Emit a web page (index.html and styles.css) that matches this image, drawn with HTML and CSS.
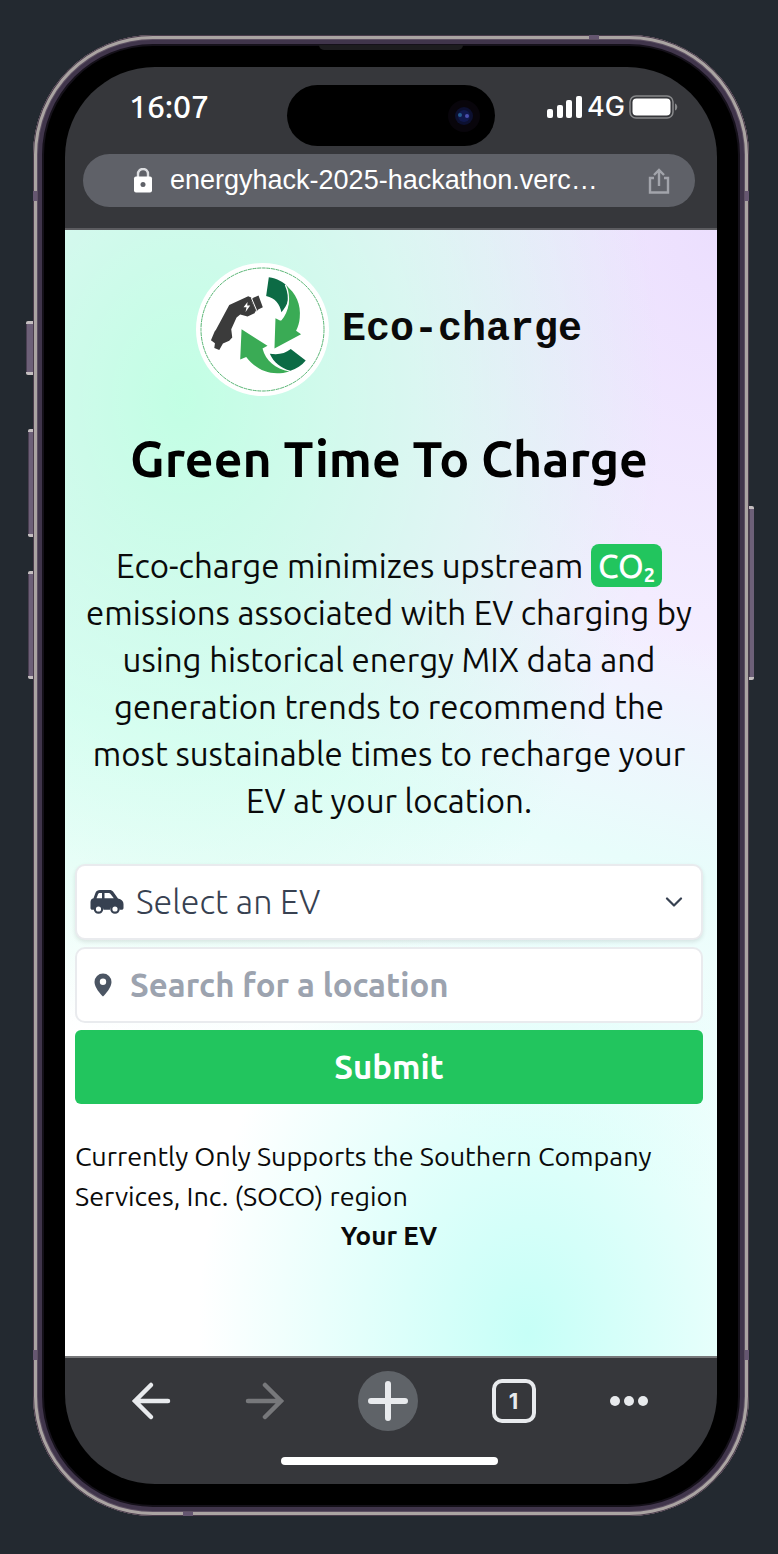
FILE: index.html
```html
<!DOCTYPE html>
<html lang="en">
<head>
<meta charset="utf-8">
<meta name="viewport" content="width=device-width, initial-scale=1">
<title>Eco-charge</title>
<link rel="stylesheet" href="styles.css">
</head>
<body>
<div class="phone">
  <span class="key key-mute"></span>
  <span class="key key-up"></span>
  <span class="key key-down"></span>
  <span class="key key-power"></span>
  <span class="band band-top"></span>
  <span class="band band-bottom"></span>
  <span class="band band-side band-left-high"></span>
  <span class="band band-side band-left-low"></span>
  <span class="band band-side band-right-high"></span>
  <span class="band band-side band-right-low"></span>
  <span class="speaker"></span>
  <div class="screen">
    <header class="browser-top">
      <div class="status">
        <time class="clock">16:07</time>
        <div class="island">
          <svg class="lens" viewBox="0 0 34 34" aria-hidden="true">
            <circle cx="17" cy="17" r="16" fill="#08050b"/>
            <circle cx="17" cy="17" r="9" fill="#0c1030"/>
            <circle cx="17" cy="17" r="6" fill="#10184c"/>
            <circle cx="13" cy="16" r="2" fill="#235a8c"/>
            <circle cx="20" cy="17" r="2" fill="#4a4fae"/>
          </svg>
        </div>
        <div class="signals">
          <svg class="bars" viewBox="0 0 36 22" aria-hidden="true">
            <g fill="#fff"><rect x="0" y="13" width="6" height="9" rx="2"/><rect x="10" y="9" width="6" height="13" rx="2"/><rect x="19" y="4" width="6" height="18" rx="2"/><rect x="29" y="0" width="6" height="22" rx="2"/></g>
          </svg>
          <span class="network">4G</span>
          <svg class="battery" viewBox="0 0 50 24" aria-hidden="true">
            <rect x="1" y="1" width="43" height="22" rx="6" fill="none" stroke="#88898b" stroke-width="1.5"/>
            <rect x="3.5" y="3.5" width="38" height="17" rx="4" fill="#fff"/>
            <path d="M46 8.500c3 1 3 6 0 7z" fill="#88898b"/>
          </svg>
        </div>
      </div>
      <div class="address">
        <svg class="lock" viewBox="0 0 20 26" aria-hidden="true">
          <path d="M5 10V6a5 5 0 0 1 10 0v4" fill="none" stroke="#dcdde0" stroke-width="2.400"/>
          <rect x="1" y="8.500" width="18" height="16" rx="2" fill="#fff"/>
          <circle cx="10" cy="16.500" r="2.500" fill="#5f6168"/>
        </svg>
        <span class="url">energyhack-2025-hackathon.verc…</span>
        <button class="share" type="button" aria-label="Share">
          <svg viewBox="0 0 22 26" fill="none" stroke="#a2a4ab" stroke-width="2.400" aria-hidden="true">
            <path d="M6 10H2v14.500h18V10h-4M11 18V2M6 7l5-5 5 5"/>
          </svg>
        </button>
      </div>
    </header>

    <main class="page">
      <div class="brand">
        <svg class="logo" viewBox="47 40 400 400" aria-hidden="true">
          <circle cx="247" cy="240" r="200" fill="#fff"/>
          <circle cx="247" cy="240" r="185" fill="none" stroke="#58b574" stroke-width="3" stroke-dasharray="12 2"/>
          <path d="M266 83C291 87 310 97 324 113C333 140 322 168 304 188C299 163 285 145 258 139Z" fill="#0c6b45"/>
          <path d="M317 108C348 130 363 166 359 205C358 220 354 232 348 244L363 254L283 297L286 206L301 214C323 187 336 148 317 108Z" fill="#3aab55"/>
          <path d="M316 106C334 145 323 187 302 212" fill="none" stroke="#fff" stroke-width="4"/>
          <path d="M184 239L262 289L247 297C257 334 285 358 328 366C274 382 229 363 198 323L180 330Z" fill="#3aab55"/>
          <path d="M269 313C295 317 314 313 332 299L377 333C365 348 349 358 331 364C303 357 280 339 269 313Z" fill="#0c6b45"/>
          <path d="M147 166L204 140L213 144L215 158L227 183L223 191L202 201L180 195L169 204L153 239L156 264L147 274L128 282L117 302L102 296L104 281L92 272L103 246L107 241Z" fill="#3b3b3b"/>
          <path d="M211 150L218 146L234 181L227 186ZM218 145L235 138L248 173L231 181Z" fill="#3b3b3b"/>
          <path d="M214 146L230 184" stroke="#fff" stroke-width="3"/>
          <path d="M202 157L190 173L199 173L196 187L210 168L201 168Z" fill="#fff"/>
        </svg>
        <span class="brand-name">Eco-charge</span>
      </div>
      <h1 class="title">Green Time To Charge</h1>
      <p class="intro">Eco-charge minimizes upstream <span class="co2">CO<sub>2</sub></span> emissions associated with EV charging by using historical energy MIX data and generation trends to recommend the most sustainable times to recharge your EV at your location.</p>
      <form class="form">
        <label class="field field-select">
          <svg class="car" viewBox="0 0 34 26" aria-hidden="true">
            <path fill="#374151" fill-rule="evenodd" d="M10 1h9.500c1.500 0 2.800.6 3.700 1.800L28 9.500c3.500.5 5.500 2.800 5.500 5.500v4c0 1-.8 1.800-1.800 1.800h-2a5 5 0 0 0-9.800 0h-6.300a5 5 0 0 0-9.800 0H2.500C1.200 20.800.5 20 .5 19v-6c0-2 1-3.300 3-3.800l2-5.500C6.300 2 7.800 1 10 1zm0 3c-1 0-1.600.3-2 1.200L6.500 9.300H12V4zm4.500 0v5.300h9.300l-3.500-4.600c-.4-.5-.8-.7-1.500-.7z"/>
            <circle cx="8.500" cy="20" r="3.700" fill="#fff" stroke="#374151" stroke-width="2.200"/>
            <circle cx="25" cy="20" r="3.700" fill="#fff" stroke="#374151" stroke-width="2.200"/>
          </svg>
          <select class="control" aria-label="Select an EV"><option>Select an EV</option></select>
          <svg class="chevron" viewBox="0 0 18 10" aria-hidden="true"><path d="M2 1.500l7 7 7-7" fill="none" stroke="#374151" stroke-width="2.200" stroke-linecap="round" stroke-linejoin="round"/></svg>
        </label>
        <label class="field field-search">
          <svg class="pin" viewBox="0 0 18 24" aria-hidden="true"><path fill="#4b5563" fill-rule="evenodd" d="M9 .5a8.500 8.500 0 0 1 8.500 8.500c0 5.500-6 12-8.500 14.500C6.500 21 .5 14.500.5 9A8.500 8.500 0 0 1 9 .5zm0 5a3.200 3.200 0 1 0 0 6.400 3.200 3.200 0 0 0 0-6.400z"/></svg>
          <input class="control control-bold" type="text" placeholder="Search for a location" aria-label="Search for a location">
        </label>
        <button class="submit" type="button">Submit</button>
      </form>
      <p class="note">Currently Only Supports the Southern Company Services, Inc. (SOCO) region</p>
      <h2 class="subtitle">Your EV</h2>
    </main>

    <footer class="browser-bottom">
      <nav class="tools">
        <button class="tool" type="button" aria-label="Back"><svg viewBox="0 0 40 40" fill="none" stroke="#e8eaed" stroke-width="4.500" stroke-linecap="round"><path d="M37 20H4M20 4L4 20l16 16"/></svg></button>
        <button class="tool" type="button" aria-label="Forward"><svg viewBox="0 0 40 40" fill="none" stroke="#77787b" stroke-width="4.500" stroke-linecap="round"><path d="M3 20h33M20 4l16 16-16 16"/></svg></button>
        <button class="tool tool-add" type="button" aria-label="New tab"><svg viewBox="0 0 40 40" fill="none" stroke="#e8eaed" stroke-width="6" stroke-linecap="round"><path d="M20 3v34M3 20h34"/></svg></button>
        <button class="tool tool-tabs" type="button" aria-label="Tabs">1</button>
        <button class="tool" type="button" aria-label="More"><svg viewBox="0 0 40 40" fill="#e8eaed"><circle cx="6" cy="20" r="5"/><circle cx="20" cy="20" r="5"/><circle cx="34" cy="20" r="5"/></svg></button>
      </nav>
      <span class="home-bar"></span>
    </footer>
  </div>
</div>
</body>
</html>
```
FILE: styles.css
```css
* { box-sizing: border-box; }

body {
  margin: 0;
  padding: 35px 29px 37px 33px;
  background: #232930;
  color: #0a0a0a;
  font-family: Ubuntu, "Noto Sans", sans-serif;
}

button, input, select { font: inherit; color: inherit; border: 0; padding: 0; background: none; }
h1, h2, p { margin: 0; }
svg { display: block; flex: none; }

.phone {
  position: relative;
  padding: 32px;
  border-radius: 120px;
  background: #000;
  box-shadow: inset 0 0 0 1px #4a3c4c, inset 0 0 0 4px #aaa4a2, inset 0 0 0 5px #5d5063, inset 0 0 0 9px #40354b, inset 0 0 0 11px #15111a;
}

/* hardware details lying over the frame */
.key {
  position: absolute;
  left: -5px;
  width: 5px;
  background: #6d6078;
  border: solid #c4bec0;
  border-width: 3px 0;
  border-radius: 2px 0 0 2px;
  box-shadow: inset 1px 0 #4a3f52;
}
.key-mute { top: 286px; height: 54px; left: -7px; width: 7px; }
.key-up { top: 394px; height: 108px; }
.key-down { top: 536px; height: 108px; }
.key-power { top: 471px; height: 174px; left: auto; right: -5px; border-radius: 0 2px 2px 0; }
.band { position: absolute; width: 10px; height: 4px; background: #655670; }
.band-top { top: 0; right: 150px; }
.band-bottom { bottom: 0; left: 150px; }
.band-side { width: 4px; height: 10px; }
.band-left-high { left: 0; top: 156px; }
.band-left-low { left: 0; bottom: 156px; }
.band-right-high { right: 0; top: 156px; }
.band-right-low { right: 0; bottom: 156px; }
.speaker {
  position: absolute;
  top: 10px;
  left: 50%;
  width: 144px;
  height: 5px;
  margin-left: -72px;
  border-radius: 0 0 6px 6px;
  background: #1c1c1e;
}

.screen {
  display: flex;
  flex-direction: column;
  overflow: hidden;
  border-radius: 90px;
  background: #36373b;
}

.browser-top { padding-bottom: 21px; border-bottom: 2px solid #5c5c60; }

.status {
  display: grid;
  grid-template-columns: 1fr 208px 1fr;
  height: 87px;
  padding-top: 18px;
  color: #fff;
}
.clock { padding-left: 64px; font-size: 32px; line-height: 42px; font-weight: 500; }
.island {
  display: flex;
  align-items: center;
  justify-content: flex-end;
  height: 61px;
  padding-right: 14px;
  border-radius: 31px;
  background: #000;
}
.lens { width: 34px; height: 34px; }
.signals {
  display: flex;
  align-items: center;
  justify-content: flex-end;
  gap: 4px;
  height: 44px;
  padding-right: 38px;
}
.bars { width: 36px; height: 22px; }
.battery { width: 50px; height: 24px; }
.network { font: 500 27px/44px Inter, sans-serif; }

.address {
  display: flex;
  align-items: center;
  height: 53px;
  margin: 0 22px 0 18px;
  padding: 0 25px 0 50px;
  border-radius: 27px;
  background: #5f6168;
  color: #fff;
}
.lock { width: 20px; height: 26px; }
.url {
  flex: 1;
  padding-left: 17px;
  overflow: hidden;
  white-space: nowrap;
  font: 27px/53px "Liberation Sans", sans-serif;
}
.share svg { width: 22px; height: 26px; }

.page {
  padding: 33px 14px 100px 10px;
  background:
    radial-gradient(ellipse 480px 640px at 18% 15%, #c2ffe4 0, #c2ffe480 50%, #c2ffe400 100%),
    radial-gradient(ellipse 330px 440px at 71% 98%, #c6fff7 0, #c6fff700 100%),
    radial-gradient(ellipse 320px 440px at 100% 0, #ecdffe 0, #ecdffe00 100%),
    linear-gradient(15deg, #fff 25%, #e8fdfb 50%, #f4eeff 68%);
}

.brand {
  display: flex;
  align-items: center;
  justify-content: center;
  gap: 13px;
}
.logo { width: 133px; height: 133px; }
.brand-name { font: bold 40px/48px "Liberation Mono", monospace; }

.title {
  padding-top: 28px;
  text-align: center;
  font-size: 50px;
  line-height: 68px;
  font-weight: 600;
  color: #000;
}
.intro {
  padding-top: 50px;
  text-align: center;
  font-size: 33px;
  line-height: 47px;
}
.co2 {
  display: inline-block;
  padding: 0 7px;
  border-radius: 8px;
  background: #22c55e;
  color: #fff;
  font-weight: 500;
  line-height: 43px;
}
.co2 sub { font-size: 20px; line-height: 0; vertical-align: -4px; font-weight: 700; }

.form {
  display: flex;
  flex-direction: column;
  gap: 7px;
  padding-top: 40px;
}
.field {
  display: flex;
  align-items: center;
  height: 76px;
  padding: 0 18px 0 13px;
  border: 2px solid #e9ebee;
  border-radius: 10px;
  background: #fff;
  font-size: 33px;
}
.field-select { box-shadow: 0 2px 4px #0000001a; color: #374151; font-size: 34px; }
.car { width: 34px; height: 26px; }
.pin { width: 18px; height: 24px; margin: 0 4px; }
.chevron { width: 18px; height: 10px; }
.control {
  flex: 1;
  min-width: 0;
  height: 72px;
  padding-left: 12px;
  padding-bottom: 2px;
  appearance: none;
  outline: 0;
  font-weight: 300;
}
.control-bold { padding-left: 14px; font-weight: 600; }
.control-bold::placeholder { color: #9ca3af; opacity: 1; }
.submit {
  height: 74px;
  padding-bottom: 2px;
  border-radius: 6px;
  background: #22c55e;
  color: #fff;
  font-size: 33px;
  font-weight: 600;
}

.note { padding-top: 32px; font-size: 27px; line-height: 40px; }
.subtitle { text-align: center; font-size: 26px; line-height: 40px; font-weight: 600; }

.browser-bottom { padding: 0 4px 19px 0; border-top: 2px solid #77787a; }
.tools {
  display: flex;
  align-items: center;
  justify-content: space-between;
  height: 86px;
  padding: 0 64px 0 66px;
}
.tool svg { width: 40px; height: 40px; }
.tool-add {
  display: grid;
  place-items: center;
  width: 60px;
  height: 60px;
  border-radius: 50%;
  background: #5f6368;
}
.tool-tabs {
  width: 44px;
  height: 44px;
  border: 4px solid #e8eaed;
  border-radius: 10px;
  color: #e8eaed;
  font: bold 22px/36px Inter, sans-serif;
}
.home-bar {
  display: block;
  width: 217px;
  height: 8px;
  margin: 13px auto 0;
  border-radius: 4px;
  background: #fff;
}
```
